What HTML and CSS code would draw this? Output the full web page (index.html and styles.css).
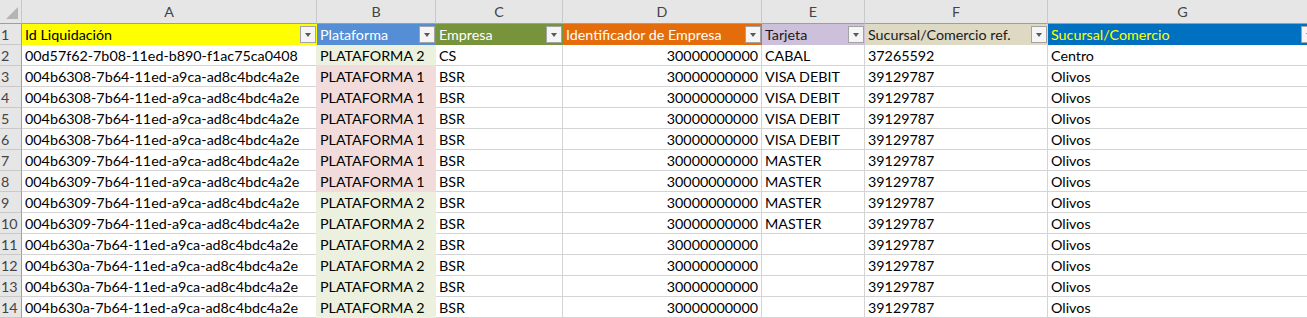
FILE: index.html
```html
<!DOCTYPE html>
<html lang="es">
<head>
<meta charset="utf-8">
<title>Liquidaciones</title>
<link rel="stylesheet" href="styles.css">
</head>
<body>
<div class="sheet">
  <div class="ch corner"><span class="tri"></span></div>
  <div class="ch">A</div>
  <div class="ch">B</div>
  <div class="ch">C</div>
  <div class="ch">D</div>
  <div class="ch">E</div>
  <div class="ch">F</div>
  <div class="ch">G</div>

  <div class="rh">1</div>
  <div class="hd h-yellow"><span class="lbl">Id Liquidación</span><span class="fb"></span></div>
  <div class="hd h-blue"><span class="lbl">Plataforma</span><span class="fb"></span></div>
  <div class="hd h-olive"><span class="lbl">Empresa</span><span class="fb"></span></div>
  <div class="hd h-orange"><span class="lbl">Identificador de Empresa</span><span class="fb"></span></div>
  <div class="hd h-lav"><span class="lbl">Tarjeta</span><span class="fb"></span></div>
  <div class="hd h-tan"><span class="lbl">Sucursal/Comercio ref.</span><span class="fb"></span></div>
  <div class="hd h-dblue"><span class="lbl">Sucursal/Comercio</span><span class="fb"></span></div>

  <div class="rh">2</div><div class="c">00d57f62-7b08-11ed-b890-f1ac75ca0408</div><div class="c p2">PLATAFORMA 2</div><div class="c">CS</div><div class="c num">30000000000</div><div class="c">CABAL</div><div class="c">37265592</div><div class="c">Centro</div>
  <div class="rh">3</div><div class="c">004b6308-7b64-11ed-a9ca-ad8c4bdc4a2e</div><div class="c p1">PLATAFORMA 1</div><div class="c">BSR</div><div class="c num">30000000000</div><div class="c">VISA DEBIT</div><div class="c">39129787</div><div class="c">Olivos</div>
  <div class="rh">4</div><div class="c">004b6308-7b64-11ed-a9ca-ad8c4bdc4a2e</div><div class="c p1">PLATAFORMA 1</div><div class="c">BSR</div><div class="c num">30000000000</div><div class="c">VISA DEBIT</div><div class="c">39129787</div><div class="c">Olivos</div>
  <div class="rh">5</div><div class="c">004b6308-7b64-11ed-a9ca-ad8c4bdc4a2e</div><div class="c p1">PLATAFORMA 1</div><div class="c">BSR</div><div class="c num">30000000000</div><div class="c">VISA DEBIT</div><div class="c">39129787</div><div class="c">Olivos</div>
  <div class="rh">6</div><div class="c">004b6308-7b64-11ed-a9ca-ad8c4bdc4a2e</div><div class="c p1">PLATAFORMA 1</div><div class="c">BSR</div><div class="c num">30000000000</div><div class="c">VISA DEBIT</div><div class="c">39129787</div><div class="c">Olivos</div>
  <div class="rh">7</div><div class="c">004b6309-7b64-11ed-a9ca-ad8c4bdc4a2e</div><div class="c p1">PLATAFORMA 1</div><div class="c">BSR</div><div class="c num">30000000000</div><div class="c">MASTER</div><div class="c">39129787</div><div class="c">Olivos</div>
  <div class="rh">8</div><div class="c">004b6309-7b64-11ed-a9ca-ad8c4bdc4a2e</div><div class="c p1">PLATAFORMA 1</div><div class="c">BSR</div><div class="c num">30000000000</div><div class="c">MASTER</div><div class="c">39129787</div><div class="c">Olivos</div>
  <div class="rh">9</div><div class="c">004b6309-7b64-11ed-a9ca-ad8c4bdc4a2e</div><div class="c p2">PLATAFORMA 2</div><div class="c">BSR</div><div class="c num">30000000000</div><div class="c">MASTER</div><div class="c">39129787</div><div class="c">Olivos</div>
  <div class="rh">10</div><div class="c">004b6309-7b64-11ed-a9ca-ad8c4bdc4a2e</div><div class="c p2">PLATAFORMA 2</div><div class="c">BSR</div><div class="c num">30000000000</div><div class="c">MASTER</div><div class="c">39129787</div><div class="c">Olivos</div>
  <div class="rh">11</div><div class="c">004b630a-7b64-11ed-a9ca-ad8c4bdc4a2e</div><div class="c p2">PLATAFORMA 2</div><div class="c">BSR</div><div class="c num">30000000000</div><div class="c"></div><div class="c">39129787</div><div class="c">Olivos</div>
  <div class="rh">12</div><div class="c">004b630a-7b64-11ed-a9ca-ad8c4bdc4a2e</div><div class="c p2">PLATAFORMA 2</div><div class="c">BSR</div><div class="c num">30000000000</div><div class="c"></div><div class="c">39129787</div><div class="c">Olivos</div>
  <div class="rh">13</div><div class="c">004b630a-7b64-11ed-a9ca-ad8c4bdc4a2e</div><div class="c p2">PLATAFORMA 2</div><div class="c">BSR</div><div class="c num">30000000000</div><div class="c"></div><div class="c">39129787</div><div class="c">Olivos</div>
  <div class="rh">14</div><div class="c">004b630a-7b64-11ed-a9ca-ad8c4bdc4a2e</div><div class="c p2">PLATAFORMA 2</div><div class="c">BSR</div><div class="c num">30000000000</div><div class="c"></div><div class="c">39129787</div><div class="c">Olivos</div>
</div>
</body>
</html>
```

FILE: styles.css
```css
html, body {
  margin: 0;
  padding: 0;
  background: #ffffff;
  overflow: hidden;
}

.sheet {
  display: grid;
  grid-template-columns: 22px 295px 119px 127px 199px 103px 183px 270px;
  grid-template-rows: 24px;
  grid-auto-rows: 21px;
  width: 1318px;
  font-family: Lato, "Liberation Sans", sans-serif;
  font-size: 14.3px;
  color: #000;
}

.sheet > div {
  box-sizing: border-box;
  border-right: 1px solid #d4d4d4;
  border-bottom: 1px solid #d4d4d4;
  line-height: 22px;
  white-space: nowrap;
  overflow: hidden;
}

/* column letters */
.ch {
  background: #e6e6e6;
  color: #444;
  text-align: center;
  line-height: 24px !important;
  border-right-color: #c9c9c9 !important;
  border-bottom-color: #9e9e9e !important;
}

.corner {
  display: flex;
  align-items: flex-end;
  justify-content: flex-end;
  padding: 0 3px 4px 0;
}

.tri {
  width: 0;
  height: 0;
  border-left: 12px solid transparent;
  border-bottom: 12px solid #b4b4b4;
}

/* row numbers */
.rh {
  background: #e6e6e6;
  color: #444;
  padding-left: 1px;
  border-right-color: #9e9e9e !important;
  border-bottom-color: #c9c9c9 !important;
}

/* data cells */
.c {
  padding: 0 3px;
}

.num {
  text-align: right;
}

.p1 {
  background: #f2dcdb;
  border-color: #f2dcdb !important;
  box-shadow: -1px -1px 0 #f2dcdb;
}

.p2 {
  background: #ebf1de;
  border-color: #ebf1de !important;
  box-shadow: -1px 0 0 #ebf1de;
}

/* table header cells */
.hd {
  display: flex;
  justify-content: space-between;
  align-items: flex-start;
  padding-left: 3px;
}

.lbl {
  line-height: 22px;
}

.fb {
  flex: none;
  box-sizing: border-box;
  width: 16px;
  height: 17px;
  margin-top: 2px;
  background: #f5f5f5;
  border: 1px solid #a3a3a3;
  display: flex;
  align-items: center;
  justify-content: center;
}

.fb::after {
  content: "";
  width: 0;
  height: 0;
  border-left: 3.5px solid transparent;
  border-right: 3.5px solid transparent;
  border-top: 4px solid #5a5a5a;
  margin-top: 1px;
}

.h-yellow { background: #ffff00; border-color: #ffff00 !important; color: #000; }
.h-blue { background: #558ed5; border-color: #558ed5 !important; color: #ffffff; }
.h-olive { background: #77933c; border-color: #77933c !important; color: #ffffff; }
.h-orange { background: #e46c0a; border-color: #e46c0a !important; color: #ffffff; }
.h-lav { background: #ccc0da; border-color: #ccc0da !important; color: #1a1a1a; }
.h-tan { background: #ddd9c3; border-color: #ddd9c3 !important; color: #1a1a1a; }
.h-dblue { background: #0070c0; border-color: #0070c0 !important; color: #ffff00; }
```
